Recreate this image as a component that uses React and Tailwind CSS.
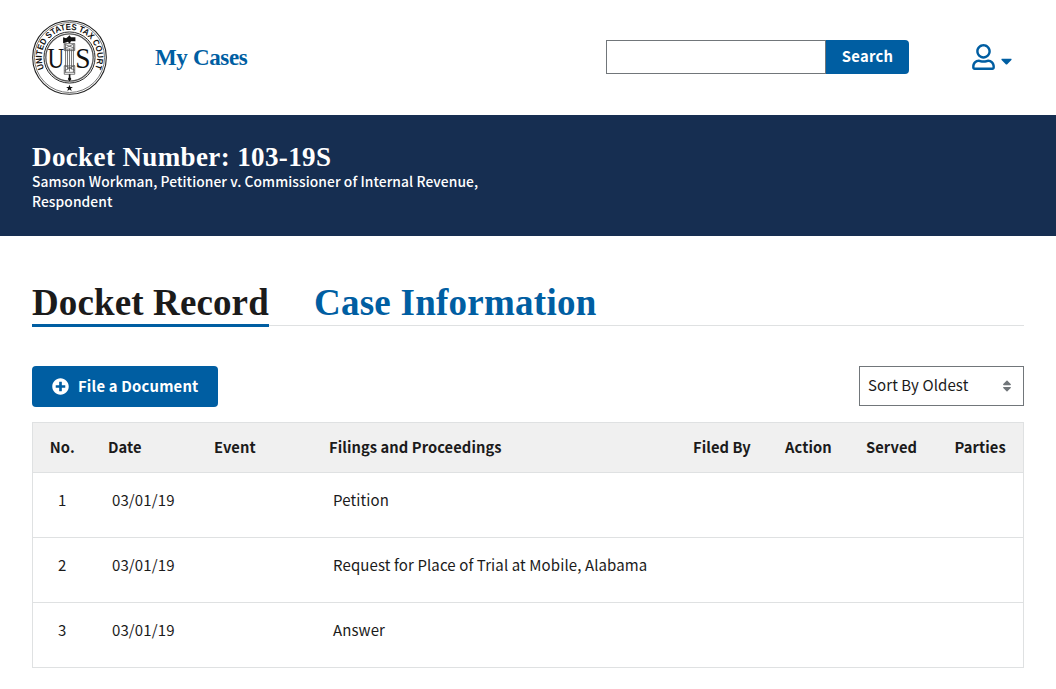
import { FaCaretDown, FaPlusCircle, FaRegUser, FaSort } from "react-icons/fa";

const rows = [
  { no: 1, date: "03/01/19", filing: "Petition" },
  { no: 2, date: "03/01/19", filing: "Request for Place of Trial at Mobile, Alabama" },
  { no: 3, date: "03/01/19", filing: "Answer" },
];

function Seal() {
  return (
    <svg className="h-[75px] w-[75px] shrink-0" viewBox="0 0 76 76" role="img" aria-label="United States Tax Court">
      <defs>
        <path id="seal-arc" d="M12.3 49.4 A28.1 28.1 0 1 1 63.7 49.4" />
      </defs>
      <g fill="none" stroke="#222">
        <circle cx="38" cy="38" r="37.3" strokeWidth="1.1" />
        <circle cx="38" cy="38" r="35.5" strokeWidth="1" stroke="#777" />
        <circle cx="38" cy="38" r="25.9" strokeWidth="1" />
        <circle cx="38" cy="38" r="24" strokeWidth="1.3" stroke="#555" />
      </g>
      <text className="font-['Liberation_Sans'] font-bold" fontSize="8.8" fill="#111">
        <textPath href="#seal-arc" textLength="111" lengthAdjust="spacingAndGlyphs">UNITED STATES TAX COURT</textPath>
      </text>
      <g className="font-['Liberation_Serif']" fontSize="29" fill="#111">
        <text x="15.8" y="48.5" textLength="17" lengthAdjust="spacingAndGlyphs">U</text>
        <text x="43.8" y="48.5" textLength="15.5" lengthAdjust="spacingAndGlyphs">S</text>
      </g>
      <rect x="32.5" y="21" width="11" height="36" fill="#fff" />
      <path d="M31.5 17.5l3 1 2-1.5 1.5-1.5 1.5 2h4.5v4h-4.5l-1 2h-1l-1-1.5-3 1-2 .5z" fill="#111" />
      <g fill="none" stroke="#555" strokeWidth="0.8">
        <path d="M34 25v28M36 30v20M38 29v23M40 30v20M42 25v28" />
        <path d="M32.8 24.5l10 4M43 24l-10 5M32.8 29.5h10.4M33 46l10.5 5M43.3 46l-10.5 5.5M33 53h10.5" />
        <path d="M32.7 24v7h10.6v-7zM32.7 46.5v8.5h10.6v-8.5z" />
      </g>
      <path d="M37.3 55h1.6v3l1 1.8-1.8 2.4-1.8-2.4 1-1.8z" fill="#111" />
      <path d="M38 65.7l.9 2.2h2.5l-2 1.6.8 2.4-2.2-1.4-2.2 1.4.8-2.4-2-1.6h2.5z" fill="#111" />
    </svg>
  );
}

export default function App() {
  return (
    <div className="min-h-[689px] bg-white font-['Noto_Sans_CJK_SC',sans-serif] text-[15px] leading-5 text-[#1b1b1b]">
      <header className="flex h-[115px] items-center pr-11 pl-8">
        <Seal />
        <a href="#" className="ml-12 font-['Liberation_Serif',serif] text-[23px] leading-7 font-bold tracking-[-0.35px] whitespace-nowrap text-[#005ea2]">
          My Cases
        </a>
        <form className="mb-[2px] ml-auto flex h-[34px]">
          <input aria-label="Search" className="w-[220px] border border-[#71767a]" />
          <button type="button" className="w-[83px] rounded-r bg-[#005ea2] pb-px text-center text-[14.8px] font-bold tracking-[0.25px] text-white">
            Search
          </button>
        </form>
        <button type="button" className="mb-[2px] ml-[63px] flex items-center gap-[6px] text-[#005ea2]" aria-label="Account">
          <FaRegUser className="h-[26px] w-[23px]" />
          <FaCaretDown className="mt-2 h-[18px] w-[11px]" />
        </button>
      </header>

      <section className="h-[121px] bg-[#162e51] px-8 pt-[27px] text-white">
        <h1 className="h-[29px] font-['Liberation_Serif',serif] text-[27px] leading-[30px] font-bold tracking-[0.38px]">Docket Number: 103-19S</h1>
        <p className="w-[460px] text-[13.8px] leading-5 font-medium tracking-[0.08px]">
          Samson Workman, Petitioner v. Commissioner of Internal Revenue, Respondent
        </p>
      </section>

      <main className="px-8 pt-[46px]">
        <nav className="flex h-[44px] gap-[45px] border-b border-[#dfe1e2] font-['Liberation_Serif',serif] text-[37px] leading-[42px] font-bold whitespace-nowrap">
          <a href="#" className="h-[45px] w-[237px] border-b-3 border-[#005ea2] tracking-[0.12px]">Docket Record</a>
          <a href="#" className="tracking-[0.25px] text-[#005ea2]">Case Information</a>
        </nav>

        <div className="mt-10 flex items-start justify-between">
          <button type="button" className="flex h-[41px] w-[186px] items-center gap-[9px] rounded bg-[#005ea2] pl-5 text-[14.8px] font-bold tracking-[0.2px] whitespace-nowrap text-white">
            <FaPlusCircle className="h-[17px] w-[17px]" />
            <span className="pb-px">File a Document</span>
          </button>
          <button type="button" className="flex h-10 w-[165px] items-center justify-between border border-[#71767a] pr-[11px] pl-2">
            <span className="pb-[2px] tracking-[0.1px]">Sort By Oldest</span>
            <FaSort className="h-[14px] w-[10px] text-[#71767a]" />
          </button>
        </div>

        <table className="mt-[15px] w-full table-fixed border-collapse border border-[#dfe1e2] text-left">
          <colgroup>
            <col className="w-[59px]" />
            <col className="w-[106px]" />
            <col className="w-[115px]" />
            <col className="w-[364px]" />
            <col className="w-[92px]" />
            <col className="w-[81px]" />
            <col className="w-[88px]" />
            <col />
          </colgroup>
          <thead className="bg-[#f0f0f0]">
            <tr className="h-[50px] border-b border-[#dfe1e2] text-[14.7px] tracking-[0.08px] whitespace-nowrap *:pb-[2px] *:font-bold">
              <th className="text-center">No.</th>
              <th className="pl-[16.5px]">Date</th>
              <th className="pl-[16.5px]">Event</th>
              <th className="pl-[16.5px]">Filings and Proceedings</th>
              <th className="pl-[16.5px]">Filed By</th>
              <th className="pl-[16.5px]">Action</th>
              <th className="pl-[16.5px]">Served</th>
              <th className="pl-[17px]">Parties</th>
            </tr>
          </thead>
          <tbody>
            {rows.map((row) => (
              <tr key={row.no} className="h-[65px] border-b border-[#dfe1e2] align-top tracking-[0.11px] *:pt-[17px]">
                <td className="text-center">{row.no}</td>
                <td className="pl-[20.5px]">{row.date}</td>
                <td />
                <td className="pl-[20.5px]">{row.filing}</td>
                <td />
                <td />
                <td />
                <td />
              </tr>
            ))}
          </tbody>
        </table>
      </main>
    </div>
  );
}
